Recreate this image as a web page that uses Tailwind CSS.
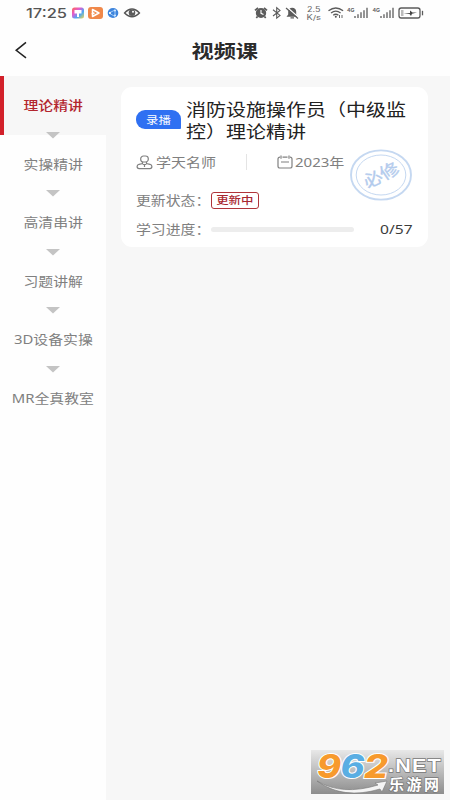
<!DOCTYPE html>
<html lang="zh-CN">
<head>
<meta charset="utf-8">
<title>视频课</title>
<script src="https://cdn.jsdelivr.net/npm/@tailwindcss/browser@4"></script>
</head>
<body class="w-[450px] h-[800px] overflow-hidden bg-[#fefefe] font-['Noto_Sans','Noto_Sans_CJK_SC',sans-serif]">
<div class="flex flex-col w-[450px] h-[800px]">
  <!-- status bar -->
  <header class="h-[26px] shrink-0">
    <svg width="450" height="26" viewBox="0 0 450 26" font-family="Inter, 'Noto Sans', sans-serif">
      <defs>
        <linearGradient id="rainbow" x1="0" y1="0" x2="1" y2="1"><stop offset="0" stop-color="#ff6a4a"/><stop offset=".35" stop-color="#e45ad0"/><stop offset=".65" stop-color="#4aa8f5"/><stop offset="1" stop-color="#f7d84a"/></linearGradient>
      </defs>
      <text x="26" y="18.300" font-size="13.5" font-weight="500" fill="#555" textLength="41" lengthAdjust="spacingAndGlyphs">17:25</text>
      <rect x="72" y="7.500" width="12" height="11" rx="2.500" fill="url(#rainbow)"/>
      <path d="M74.500 10h7v3.500h-7zM77 13h2v4h-2z" fill="#fff"/>
      <rect x="88" y="7" width="15" height="12" rx="3" fill="#f0884a"/>
      <path d="M92.500 9.500v7l6.500-3.500zM91.500 14l3-1" fill="none" stroke="#fff" stroke-width="1.500" stroke-linejoin="round"/>
      <ellipse cx="113" cy="13" rx="5.300" ry="5" fill="#3d84dc"/>
      <path d="M109 13l6-3M109 13l6 3.500M115 10v6" stroke="#b8dcff" stroke-width=".8"/><circle cx="110" cy="13" r="1" fill="#fff"/><circle cx="115" cy="10.500" r="1" fill="#d8ecff"/><circle cx="115" cy="15.500" r="1" fill="#d8ecff"/>
      <path d="M124.500 13q7.500-8 15 0q-7.500 7.500-15 0z" fill="none" stroke="#555" stroke-width="1.300"/>
      <circle cx="132" cy="12.800" r="3.300" fill="#5c5c5c"/><circle cx="133" cy="11.700" r="1" fill="#fff"/>
      <!-- alarm -->
      <ellipse cx="261" cy="13" rx="5.200" ry="4.900" fill="#5c5c5c"/>
      <path d="M255 10.300l3-2.500M267 10.300l-3-2.500M257.500 16.500l-1.200 1.600M264.500 16.500l1.200 1.600" stroke="#5c5c5c" stroke-width="1.700"/>
      <path d="M261 10v3.300l2.500 1.200" fill="none" stroke="#fff" stroke-width="1.100"/>
      <!-- bluetooth -->
      <path d="M273 9.800l7 5.600-3.300 2.700V7.700L280 10.400l-7 5.600" fill="none" stroke="#5c5c5c" stroke-width="1.100"/>
      <!-- muted bell -->
      <path d="M286.500 16.800l1.700-2.300v-3q.5-3.700 4-3.700t4 3.700v3l1.700 2.300zM290.500 17.300h3.500v1.300h-3.500z" fill="#5c5c5c"/>
      <path d="M287 7.300l11.500 10" stroke="#fff" stroke-width="1.300"/><path d="M286 8l12 10.500" stroke="#5c5c5c" stroke-width="1.200"/>
      <g fill="#666">
        <text x="307" y="11.800" font-size="7" textLength="13.500" lengthAdjust="spacingAndGlyphs">2.5</text>
        <text x="306.500" y="19.600" font-size="7" textLength="14.500" lengthAdjust="spacingAndGlyphs">K/s</text>
        <text x="347" y="11.500" font-size="5" font-weight="700" textLength="7.500" lengthAdjust="spacingAndGlyphs">4G</text>
        <text x="372.500" y="11.500" font-size="5" font-weight="700" textLength="7.500" lengthAdjust="spacingAndGlyphs">4G</text>
      </g>
      <g fill="none" stroke="#5c5c5c" stroke-width="1.300">
        <path d="M328.500 10.800q7.300-5.600 14.600 0M331 13q4.800-3.700 9.600 0M333.200 15.200q2.600-1.900 5.200 0"/>
        <path d="M355 18v-2M358 18v-3.700M361 18v-5.700M364 18v-7.800M367 18V7.800"/>
        <path d="M381 18v-2M384 18v-3.700M387 18v-5.700M390 18v-7.800M393 18V7.800"/>
        <rect x="399" y="8" width="21" height="10" rx="2.200"/>
        <path d="M422.500 10.800v4.500"/>
      </g>
      <circle cx="335.800" cy="16.800" r="1" fill="#555"/><path d="M339.500 18v-3M342 15v3" stroke="#555" stroke-width=".9"/>
      <rect x="401" y="10" width="2.500" height="6" fill="#bbb"/>
      <path d="M403.500 13.500l6.500-.5v-2.500l2.500 2h4.500l-5 1.200-1 2.300-1.500-2z" fill="#444"/>
    </svg>
  </header>
  <!-- title bar -->
  <nav class="relative h-[50px] shrink-0 flex items-center justify-center">
    <svg class="absolute left-[14px] top-[15px]" width="14" height="18" viewBox="0 0 14 18" fill="none" stroke="#222" stroke-width="1.500"><path d="M12 1.300L2.200 9.300 12 16.800"/></svg>
    <h1 class="text-[18.500px] leading-[50px] font-bold text-[#2b2b2b] scale-x-[1.2] -mt-px">视频课</h1>
  </nav>
  <div class="flex flex-1 min-h-0">
    <!-- chapter list -->
    <aside class="w-[106px] shrink-0 flex flex-col text-[12.600px] text-[#808080]">
      <div class="relative h-[58.500px] flex items-center justify-center bg-[#f7f7f7] border-l-4 border-[#d2202a] text-[#b3262e] font-medium"><span class="-ml-1 pt-[3px] whitespace-nowrap scale-x-[1.18]">理论精讲</span><svg class="absolute left-[42px] -bottom-[4px] z-10" width="14" height="7"><path d="M0 0h14L7 6.500z" fill="#c4c4c4"/></svg></div>
      <div class="relative h-[58.500px] flex items-center justify-center"><span class="pt-[3px] whitespace-nowrap scale-x-[1.18]">实操精讲</span><svg class="absolute left-[46px] -bottom-[4px]" width="14" height="7"><path d="M0 0h14L7 6.500z" fill="#c4c4c4"/></svg></div>
      <div class="relative h-[58.500px] flex items-center justify-center"><span class="pt-[3px] whitespace-nowrap scale-x-[1.18]">高清串讲</span><svg class="absolute left-[46px] -bottom-[4px]" width="14" height="7"><path d="M0 0h14L7 6.500z" fill="#c4c4c4"/></svg></div>
      <div class="relative h-[58.500px] flex items-center justify-center"><span class="pt-[3px] whitespace-nowrap scale-x-[1.18]">习题讲解</span><svg class="absolute left-[46px] -bottom-[4px]" width="14" height="7"><path d="M0 0h14L7 6.500z" fill="#c4c4c4"/></svg></div>
      <div class="relative h-[58.500px] flex items-center justify-center"><span class="pt-[3px] whitespace-nowrap scale-x-[1.18]">3D设备实操</span><svg class="absolute left-[46px] -bottom-[4px]" width="14" height="7"><path d="M0 0h14L7 6.500z" fill="#c4c4c4"/></svg></div>
      <div class="h-[58.500px] flex items-center justify-center"><span class="pt-[3px] whitespace-nowrap scale-x-[1.18]">MR全真教室</span></div>
    </aside>
    <main class="relative flex-1 bg-[#f7f7f7] pt-[11px] pl-[15px]">
      <section class="relative w-[307px] h-[160px] rounded-[11px] bg-white pl-[15px] pt-[11px] text-[12.600px] text-[#808080]">
        <div class="flex h-[43px]">
          <div class="mt-[12px] w-[45px] h-[19px] shrink-0 rounded-[9px_9px_1px_9px] bg-[#2f70f2] flex items-center justify-center text-white text-[10.500px] leading-none"><span class="pt-px scale-x-[1.18]">录播</span></div>
          <h2 class="ml-[5px] pt-px text-[17px] leading-[21.500px] text-[#222] whitespace-nowrap origin-left scale-x-[1.176]">消防设施操作员（中级监<br>控）理论精讲</h2>
        </div>
        <div class="flex items-center h-[42px]">
          <svg width="17" height="15" viewBox="0 0 17 15" fill="none" stroke="#808080" stroke-width="1.200"><rect x="4.700" y="1" width="7.600" height="6" rx="2.800"/><path d="M6.500 7v1.500L3 9.300q-1.900.6-1.900 2.300 0 2 2 2h10.800q2 0 2-2 0-1.700-1.900-2.300l-3.500-.8V7M8.500 9.500v2.500M6.700 9.500h3.600"/></svg>
          <span class="w-[90px] ml-[3px] pt-[2px] whitespace-nowrap"><span class="inline-block origin-left scale-x-[1.19]">学天名师</span></span>
          <span class="w-px h-[16px] bg-[#e4e4e4]"></span>
          <svg class="ml-[30px]" width="16" height="14" viewBox="0 0 16 14" fill="none" stroke="#808080" stroke-width="1.200"><path d="M3 2.200q-2 0-2 1.800v7.200q0 1.800 2 1.800h10q2 0 2-1.800V4q0-1.800-2-1.800M5.500 2.200h5M4 .5v3.300M12 .5v3.300M4 7h8"/></svg>
          <span class="ml-[2px] pt-[2px] whitespace-nowrap origin-left scale-x-[1.19]">2023年</span>
        </div>
        <div class="flex items-center h-[34px]">
          <span class="w-[75px] pt-[2px] whitespace-nowrap"><span class="inline-block origin-left scale-x-[1.18]">更新状态：</span></span>
          <span class="w-[48px] h-[17px] rounded-[3px] border border-[#b0343a] text-[#a8262e] font-medium text-[10.500px] leading-none flex items-center justify-center"><span class="pt-px scale-x-[1.18]">更新中</span></span>
        </div>
        <div class="flex items-center h-[24px]">
          <span class="w-[75px] pt-[2px] whitespace-nowrap"><span class="inline-block origin-left scale-x-[1.18]">学习进度：</span></span>
          <span class="w-[143px] h-[5px] rounded-full bg-[#ededed]"></span>
          <span class="ml-[26px] pt-[2px] text-[#3c3c3c] text-[13px] whitespace-nowrap origin-left scale-x-[1.2]">0/57</span>
        </div>
        <!-- required-course stamp -->
        <svg class="absolute left-[229px] top-[62px]" width="63" height="53" viewBox="0 0 63 53" fill="none" stroke="#c5d8f1">
          <ellipse cx="31" cy="26" rx="30" ry="24.600" stroke-width="1.900"/>
          <ellipse cx="31" cy="26" rx="24.800" ry="20" stroke-width="1"/>
          <text transform="translate(31 26) scale(1.18 1) rotate(-30)" y="6" text-anchor="middle" font-size="16.500" fill="#b3cbed" stroke="#b3cbed" stroke-width=".3">必修</text>
        </svg>
      </section>
      <!-- site watermark -->
      <svg class="absolute left-[205px] top-[674px] overflow-visible" width="133" height="44" viewBox="0 0 133 44">
        <defs><linearGradient id="plate" x1="0" y1="0" x2="0" y2="1"><stop offset="0" stop-color="#e8e8e8"/><stop offset="1" stop-color="#8d8d8d"/></linearGradient></defs>
        <rect width="133" height="44" fill="url(#plate)"/>
        <path d="M6 31Q31 46 67 35l-3-2 12-2-5 11-2-3Q32 50 6 31z" fill="#f4f4f4" stroke="#777" stroke-width=".6"/>
        <g font-family="Inter, sans-serif" font-weight="800" font-style="italic" font-size="32" stroke="#fff" stroke-width="2" paint-order="stroke">
          <text x="6" y="27.500" fill="#f79a2d" textLength="24" lengthAdjust="spacingAndGlyphs">9</text>
          <text x="29.500" y="27.500" fill="#5aaee3" textLength="24" lengthAdjust="spacingAndGlyphs">6</text>
          <text x="53" y="27.500" fill="#f79a2d" textLength="24" lengthAdjust="spacingAndGlyphs">2</text>
        </g>
        <g fill="#fff" stroke="#777" stroke-width="1.300" paint-order="stroke" font-weight="700">
          <text x="77" y="22" font-family="Liberation Sans, sans-serif" font-size="18" textLength="54" lengthAdjust="spacingAndGlyphs" letter-spacing="1">.NET</text>
          <text x="78" y="39.500" font-family="Noto Sans CJK SC, sans-serif" font-size="15" textLength="50">乐游网</text>
        </g>
      </svg>
    </main>
  </div>
</div>
</body>
</html>
